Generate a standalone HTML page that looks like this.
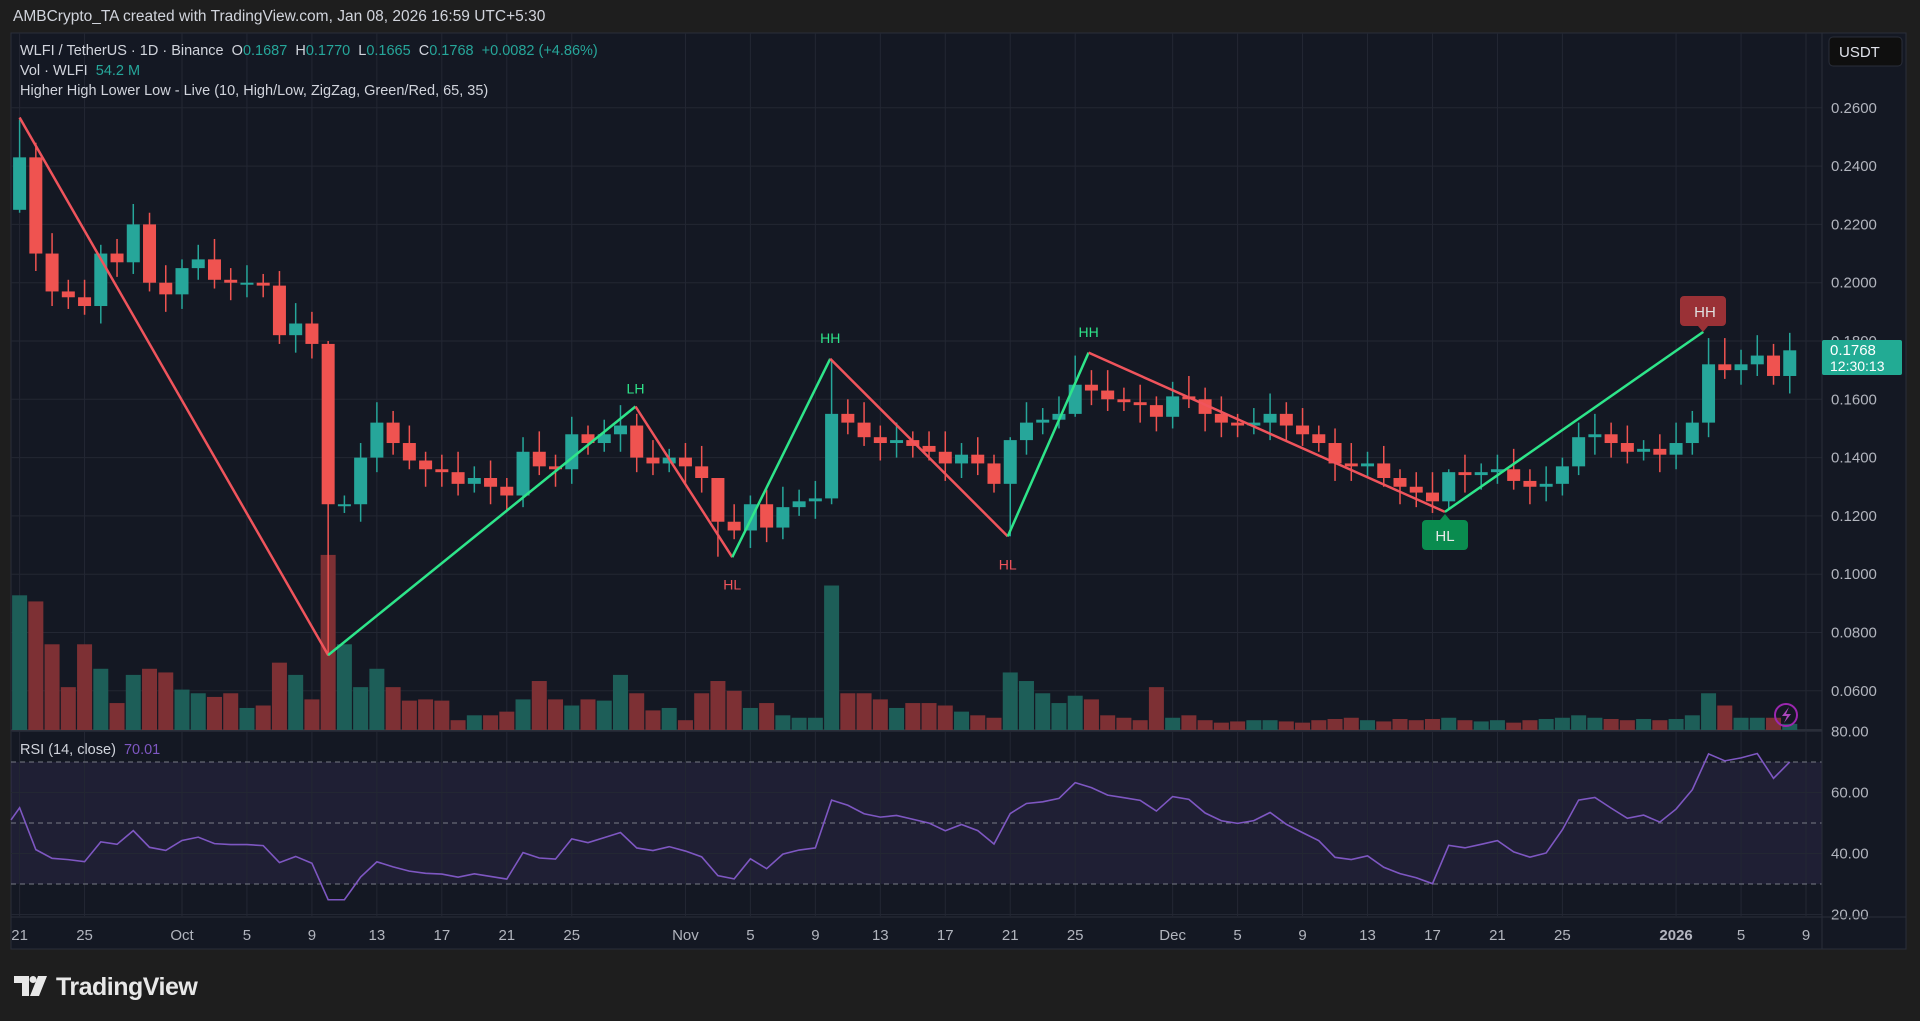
<!DOCTYPE html><html><head><meta charset="utf-8"><style>
body{margin:0;background:#1e1e1e;width:1920px;height:1021px;overflow:hidden;font-family:"Liberation Sans",sans-serif;}
</style></head><body>
<svg id="s" width="1920" height="1021" xmlns="http://www.w3.org/2000/svg" style="position:absolute;left:0;top:0;font-family:'Liberation Sans',sans-serif"></svg>
<script>
const S=1.2245;
const svg=document.getElementById('s');
let h='';
h+='<rect x="0" y="0" width="1920" height="1021" fill="#1e1e1e"/>';
h+='<text x="13" y="21" fill="#d1d4dc" font-size="15.5">AMBCrypto_TA created with TradingView.com, Jan 08, 2026 16:59 UTC+5:30</text>';
h+='<rect x="11" y="33" width="1895" height="916" fill="#141823" stroke="#2a2e39"/>';
const ry=v=>762+(70-v)*3.05;
h+=`<rect x="11" y="${ry(70)}" width="1811" height="${ry(30)-ry(70)}" fill="#7e57c2" fill-opacity="0.11"/>`;
const X=i=>19.6+16.24*i;
const Y=p=>107.8+(0.26-p)*2915;
const dates=[[0,'21'],[4,'25'],[10,'Oct'],[14,'5'],[18,'9'],[22,'13'],[26,'17'],[30,'21'],[34,'25'],[41,'Nov'],[45,'5'],[49,'9'],[53,'13'],[57,'17'],[61,'21'],[65,'25'],[71,'Dec'],[75,'5'],[79,'9'],[83,'13'],[87,'17'],[91,'21'],[95,'25'],[102,'2026'],[106,'5'],[110,'9']];
dates.forEach(d=>{const x=X(d[0]);h+=`<line x1="${x}" y1="33" x2="${x}" y2="916" stroke="#232733"/>`;
h+=`<text x="${x}" y="940" fill="#b2b5be" font-size="15" text-anchor="middle" ${d[1]=='2026'?'font-weight="bold"':''}>${d[1]}</text>`;});
for(let p=0.06;p<=0.261;p+=0.02){const y=Y(p);h+=`<line x1="11" y1="${y}" x2="1822" y2="${y}" stroke="#232733"/>`;
 h+=`<text x="1831" y="${y+5}" fill="#b2b5be" font-size="15">${p.toFixed(4)}</text>`;}
[80,60,40,20].forEach(v=>{const y=ry(v);h+=`<line x1="11" y1="${y}" x2="1822" y2="${y}" stroke="#232733"/><text x="1831" y="${y+5}" fill="#b2b5be" font-size="15">${v.toFixed(2)}</text>`;});
[70,50,30].forEach(v=>{h+=`<line x1="11" y1="${ry(v)}" x2="1822" y2="${ry(v)}" stroke="#787b86" stroke-dasharray="5,4"/>`;});
h+='<line x1="11" y1="730" x2="1822" y2="730" stroke="#2a2e39" stroke-width="2"/>';
h+='<line x1="1822" y1="33" x2="1822" y2="949" stroke="#2a2e39"/>';
h+='<line x1="11" y1="917" x2="1906" y2="917" stroke="#2a2e39"/>';
const C=[0.243,0.21,0.197,0.195,0.192,0.21,0.207,0.22,0.2,0.196,0.205,0.208,0.201,0.2,0.2,0.199,0.182,0.186,0.179,0.124,0.124,0.14,0.152,0.145,0.139,0.136,0.135,0.131,0.133,0.13,0.127,0.142,0.137,0.136,0.148,0.145,0.148,0.151,0.14,0.138,0.14,0.137,0.133,0.118,0.115,0.124,0.116,0.123,0.125,0.126,0.155,0.152,0.147,0.145,0.146,0.144,0.142,0.138,0.141,0.138,0.131,0.146,0.152,0.153,0.155,0.165,0.163,0.16,0.159,0.158,0.154,0.161,0.16,0.155,0.152,0.151,0.152,0.155,0.151,0.148,0.145,0.138,0.137,0.138,0.133,0.13,0.128,0.125,0.135,0.134,0.135,0.136,0.132,0.13,0.131,0.137,0.147,0.148,0.145,0.142,0.143,0.141,0.145,0.152,0.172,0.170,0.172,0.175,0.168,0.1768];
const O=C.map((c,i)=>i==0?0.225:C[i-1]);
const V=[110,105,70,35,70,50,22,45,50,47,33,30,27,30,18,20,55,45,25,143,70,35,50,35,24,25,24,8,12,12,15,25,40,25,20,25,24,45,30,16,18,8,30,40,32,18,22,12,10,10,118,30,30,25,18,22,22,20,15,12,10,47,40,30,22,28,25,12,10,8,35,10,12,8,6,7,8,8,7,6,8,9,10,8,7,9,8,9,10,8,7,8,6,8,9,10,12,10,9,8,9,8,9,12,30,20,10,10,10,5];
const ext={0:[0.256,0.224],19:[0.18,0.072],43:[0.133,0.106],50:[0.173,0.124],61:[0.147,0.113],65:[0.175,0.154],88:[0.136,0.122],104:[0.181,0.147],105:[0.181,0.167]};
for(let i=0;i<C.length;i++){
 const o=O[i],c=C[i],up=c>=o,vc=up?'#1d5e58':'#7d3034';
 const x=X(i);
 const vh=V[i]*S;h+=`<rect x="${x-7.5}" y="${730-vh}" width="15" height="${vh}" fill="${vc}"/>`;
}
for(let i=0;i<C.length;i++){
 const o=O[i],c=C[i],up=c>=o,col=up?'#26a69a':'#ef5350';
 const x=X(i);let hi=Math.max(o,c)+0.003+((i*7)%5)*0.001,lo=Math.min(o,c)-0.003-((i*3)%4)*0.001;
 if(ext[i]){hi=ext[i][0];lo=ext[i][1];}
 h+=`<line x1="${x}" y1="${Y(hi)}" x2="${x}" y2="${Y(lo)}" stroke="${col}" stroke-width="1.5"/>`;
 const t=Y(Math.max(o,c)),b=Y(Math.min(o,c));
 h+=`<rect x="${x-6.5}" y="${t}" width="13" height="${Math.max(b-t,2)}" fill="${col}"/>`;
}
const Z=[[16,96],[268,535],[519,332],[598,455],[678,293],[823,438],[889,288],[1180,418],[1391,271]];
for(let k=0;k<Z.length-1;k++){const a=Z[k],b=Z[k+1];const col=b[1]<a[1]?'#2ee58a':'#f0545c';
 h+=`<line x1="${a[0]*S}" y1="${a[1]*S}" x2="${b[0]*S}" y2="${b[1]*S}" stroke="${col}" stroke-width="2.5"/>`;}
[['LH',519,318,'#2ee58a'],['HL',598,478,'#f0545c'],['HH',678,277,'#2ee58a'],['HL',823,462,'#f0545c'],['HH',889,272,'#2ee58a']].forEach(l=>{
 h+=`<text x="${l[1]*S}" y="${l[2]*S+4}" fill="${l[3]}" font-size="14" text-anchor="middle">${l[0]}</text>`;});
h+=`<path d="M1684 296h38a4 4 0 0 1 4 4v22a4 4 0 0 1-4 4h-14l-5 6-5-6h-14a4 4 0 0 1-4-4v-22a4 4 0 0 1 4-4z" fill="#9a3136"/><text x="1705" y="317" fill="#e0e0e0" font-size="15" text-anchor="middle">HH</text>`;
h+=`<path d="M1426 520h14l5-6 5 6h14a4 4 0 0 1 4 4v22a4 4 0 0 1-4 4h-38a4 4 0 0 1-4-4v-22a4 4 0 0 1 4-4z" fill="#0a8c4f"/><text x="1445" y="541" fill="#e8e8e8" font-size="15" text-anchor="middle">HL</text>`;
let ag=0.006,al=0.006,pts=[[11,ry(51)],[X(0),ry(55)]];
for(let i=1;i<C.length;i++){const d=C[i]-C[i-1];ag=(ag*13+Math.max(d,0))/14;al=(al*13+Math.max(-d,0))/14;let r=100-100/(1+ag/al);pts.push([X(i),ry(r)]);}
pts[pts.length-1][1]=ry(70.01);
h+=`<polyline points="${pts.map(p=>p.join(',')).join(' ')}" fill="none" stroke="#7e57c2" stroke-width="1.6"/>`;
h+='<text x="20" y="55" font-size="14.5" fill="#d1d4dc">WLFI / TetherUS · 1D · Binance&#160;&#160;O<tspan fill="#26a69a">0.1687</tspan>&#160;&#160;H<tspan fill="#26a69a">0.1770</tspan>&#160;&#160;L<tspan fill="#26a69a">0.1665</tspan>&#160;&#160;C<tspan fill="#26a69a">0.1768</tspan>&#160;&#160;<tspan fill="#26a69a">+0.0082 (+4.86%)</tspan></text>';
h+='<text x="20" y="75" font-size="14.5" fill="#d1d4dc">Vol · WLFI&#160;&#160;<tspan fill="#26a69a">54.2 M</tspan></text>';
h+='<text x="20" y="95" font-size="14.5" fill="#d1d4dc">Higher High Lower Low - Live (10, High/Low, ZigZag, Green/Red, 65, 35)</text>';
h+='<text x="20" y="754" font-size="14.5" fill="#d1d4dc">RSI (14, close)&#160;&#160;<tspan fill="#7e57c2">70.01</tspan></text>';
h+='<rect x="1829" y="37" width="73" height="29" rx="4" fill="#0f0f0f" stroke="#2a2e39"/><text x="1839" y="57" fill="#e0e3eb" font-size="15">USDT</text>';
h+=`<rect x="1822" y="340" width="80" height="35" rx="2" fill="#22ab94"/><text x="1830" y="355" fill="#fff" font-size="15">0.1768</text><text x="1830" y="371" fill="#fff" font-size="14">12:30:13</text>`;
h+='<circle cx="1786" cy="715" r="11" fill="none" stroke="#9c27b0" stroke-width="2"/><path d="M1789 707l-7 9h5l-3 7 7-9h-5z" fill="#ab47bc"/>';
h+='<path d="M14 976h15v20h-7v-13h-8z M38 976h9l-8 20h-9z" fill="#e8e8e8"/><circle cx="33" cy="979.5" r="3.5" fill="#e8e8e8"/>';
h+='<text x="56" y="995" fill="#e8e8e8" font-size="25" font-weight="bold" letter-spacing="-0.5">TradingView</text>';
svg.innerHTML=h;
</script>
</body></html>
